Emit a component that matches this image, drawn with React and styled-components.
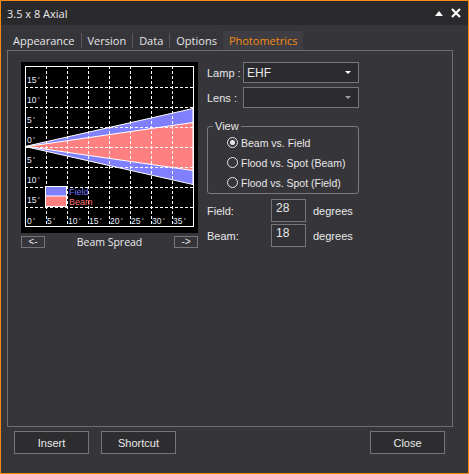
import styled, { createGlobalStyle } from "styled-components";

const GlobalStyle = createGlobalStyle`
  body {
    margin: 0;
    background: #36353a;
  }
  * { box-sizing: border-box; }
`;

const Window = styled.div`
  width: 469px;
  height: 474px;
  border: 1px solid #f68a12;
  background: #36353a;
  display: flex;
  flex-direction: column;
  font-family: "Liberation Sans", Arial, sans-serif;
  font-size: 11px;
  color: #e8e8e8;
`;

const TitleBar = styled.div`
  height: 24px;
  background: #2a2a2d;
  display: flex;
  align-items: center;
  padding: 0 7px 0 6px;
  font-family: "Open Sans", sans-serif;
  font-size: 11px;
  color: #ececec;
`;

const Title = styled.div`
  flex: 1;
`;

const TitleIcons = styled.div`
  display: flex;
  align-items: center;
  gap: 8px;
`;

const Body = styled.div`
  flex: 1;
  display: flex;
  flex-direction: column;
  padding: 6px 15px 0 6px;
`;

const TabStrip = styled.div`
  display: flex;
  height: 19px;
  align-items: stretch;
  font-family: "Open Sans", sans-serif;
  font-size: 11px;
`;

const Tab = styled.div`
  padding: 0 6px;
  display: flex;
  align-items: center;
  color: ${(p) => (p.$active ? "#f68a12" : "#e6e6e6")};
  background: ${(p) => (p.$active ? "#3d3d43" : "transparent")};
`;

const TabSep = styled.div`
  width: 1px;
  margin: 2px 0;
  background: #57575c;
`;

const Panel = styled.div`
  height: 377px;
  border: 1px solid #6e6e72;
  display: flex;
  padding: 11px 0 0 13px;
  gap: 9px;
`;

const ChartColumn = styled.div`
  width: 177px;
  display: flex;
  flex-direction: column;
`;

const ChartBox = styled.div`
  width: 177px;
  height: 171px;
  background: #000;
`;

const ChartNav = styled.div`
  display: flex;
  align-items: center;
  justify-content: space-between;
  margin-top: 2px;
  height: 13px;
`;

const NavButton = styled.div`
  width: 24px;
  height: 12px;
  border: 1px solid #76767a;
  display: flex;
  align-items: center;
  justify-content: center;
  font-size: 10px;
  line-height: 1;
`;

const ChartCaption = styled.div`
  font-family: "Open Sans", sans-serif;
  font-size: 10.5px;
  color: #eaeaea;
`;

const FormColumn = styled.div`
  width: 152px;
  display: flex;
  flex-direction: column;
`;

const SelectRow = styled.div`
  display: flex;
  align-items: center;
  height: 21px;
  margin-bottom: ${(p) => p.$gap || 0}px;
`;

const FieldLabel = styled.div`
  width: ${(p) => p.$width}px;
  white-space: nowrap;
`;

const Select = styled.div`
  width: 116px;
  height: 21px;
  border: 1px solid #76767a;
  background: #2b2b2e;
  display: flex;
  align-items: center;
  justify-content: space-between;
  padding: 0 7px 0 3px;
  font-size: 12px;
`;

const Caret = styled.span`
  width: 0;
  height: 0;
  border-left: 3.5px solid transparent;
  border-right: 3.5px solid transparent;
  border-top: 3.5px solid ${(p) => (p.$dim ? "#a0a0a0" : "#ffffff")};
`;

const Group = styled.fieldset`
  margin: 12px 0 0 0;
  padding: 3px 0 0 19px;
  height: 74px;
  border: 1px solid #7a7a7e;
  border-radius: 3px;
  display: flex;
  flex-direction: column;
  gap: 5px;
`;

const Legend = styled.legend`
  padding: 0 2px;
  margin-left: -14px;
`;

const RadioRow = styled.label`
  display: flex;
  align-items: center;
  height: 15px;
  gap: 3px;
  white-space: nowrap;
  font-size: 10.5px;
`;

const RadioDot = styled.span`
  width: 11px;
  height: 11px;
  border-radius: 50%;
  border: 1px solid #e8e8e8;
  display: flex;
  align-items: center;
  justify-content: center;
  &::after {
    content: "";
    width: 5px;
    height: 5px;
    border-radius: 50%;
    background: ${(p) => (p.$checked ? "#e8e8e8" : "transparent")};
  }
`;

const ValueRow = styled.div`
  display: flex;
  align-items: center;
  margin-top: ${(p) => p.$top}px;
`;

const ValueBox = styled.div`
  width: 35px;
  height: 23px;
  border: 1px solid #76767a;
  background: #323236;
  padding: 1px 0 0 4px;
  margin-right: 7px;
  font-size: 12px;
`;

const ButtonRow = styled.div`
  display: flex;
  padding: 4px 8px 0 7px;
  gap: 12px;
`;

const Button = styled.div`
  width: 75px;
  height: 23px;
  border: 1px solid #76767a;
  background: #2d2d30;
  display: flex;
  align-items: center;
  justify-content: center;
  margin-left: ${(p) => (p.$push ? "auto" : "0")};
`;

const hLines = [25, 45, 65, 85, 105, 125, 145];
const vLines = [25, 46, 67, 88, 109, 130, 151];
const sideLabels = ["15", "10", "5", "0", "5", "10", "15"];
const bottomLabels = ["0", "5", "10", "15", "20", "25", "30", "35"];

const Deg = ({ x, y, value }) => (
  <text x={x} y={y} fill="#e4ecff" fontSize="8.5" fontFamily="Liberation Sans, sans-serif">
    {value}
    <tspan fontSize="5" dy="-2"> °</tspan>
  </text>
);

const BeamChart = () => {
  const cy = 84.5;
  return (
    <svg width="177" height="171" viewBox="0 0 177 171">
      <polygon points={`4,${cy} 172,${cy - 38} 172,${cy + 38}`} fill="#8080ff" stroke="#fff" strokeWidth="1" />
      <polygon points={`6,${cy} 172,${cy - 24} 172,${cy + 24}`} fill="#ff8080" stroke="#fff" strokeWidth="1" />
      {hLines.map((y) => (
        <line key={"h" + y} x1="4" x2="172" y1={y + 0.5} y2={y + 0.5} stroke="#fff" strokeDasharray="3 2" />
      ))}
      {vLines.map((x) => (
        <line key={"v" + x} x1={x + 0.5} x2={x + 0.5} y1="4" y2="164" stroke="#fff" strokeDasharray="3 2" />
      ))}
      <rect x="4.5" y="4.5" width="168" height="160" fill="none" stroke="#fff" />
      {sideLabels.map((l, i) => (
        <Deg key={"s" + i} x={6} y={21 + i * 20} value={l} />
      ))}
      {bottomLabels.map((l, i) => (
        <Deg key={"b" + i} x={i === 0 ? 6 : 5 + i * 21} y={162} value={l} />
      ))}
      <rect x="24" y="124" width="22" height="10" fill="#8080ff" />
      <rect x="24" y="134" width="22" height="10" fill="#ff8080" />
      <rect x="24.5" y="124.5" width="21" height="20" fill="none" stroke="#fff" />
      <line x1="24" x2="46" y1="134" y2="134" stroke="#fff" />
      <text x="48" y="133" fill="#7070ff" fontSize="9" fontFamily="Liberation Sans, sans-serif">Field</text>
      <text x="48" y="143" fill="#ff7070" fontSize="9" fontFamily="Liberation Sans, sans-serif">Beam</text>
    </svg>
  );
};

const App = () => {
  return (
    <>
      <GlobalStyle />
      <Window>
        <TitleBar>
          <Title>3.5 x 8 Axial</Title>
          <TitleIcons>
            <svg width="8" height="5" viewBox="0 0 8 5">
              <polygon points="0,5 4,0 8,5" fill="#fff" />
            </svg>
            <svg width="10" height="10" viewBox="0 0 10 10">
              <path d="M1 1 L9 9 M9 1 L1 9" stroke="#fff" strokeWidth="2.2" />
            </svg>
          </TitleIcons>
        </TitleBar>
        <Body>
          <TabStrip>
            <Tab>Appearance</Tab>
            <TabSep />
            <Tab>Version</Tab>
            <TabSep />
            <Tab>Data</Tab>
            <TabSep />
            <Tab>Options</Tab>
            <Tab $active>Photometrics</Tab>
          </TabStrip>
          <Panel>
            <ChartColumn>
              <ChartBox>
                <BeamChart />
              </ChartBox>
              <ChartNav>
                <NavButton>&lt;-</NavButton>
                <ChartCaption>Beam Spread</ChartCaption>
                <NavButton>-&gt;</NavButton>
              </ChartNav>
            </ChartColumn>
            <FormColumn>
              <SelectRow $gap={4}>
                <FieldLabel $width={36}>Lamp :</FieldLabel>
                <Select>
                  <span>EHF</span>
                  <Caret />
                </Select>
              </SelectRow>
              <SelectRow>
                <FieldLabel $width={36}>Lens :</FieldLabel>
                <Select>
                  <span />
                  <Caret $dim />
                </Select>
              </SelectRow>
              <Group>
                <Legend>View</Legend>
                <RadioRow>
                  <RadioDot $checked />
                  Beam vs. Field
                </RadioRow>
                <RadioRow>
                  <RadioDot />
                  Flood vs. Spot (Beam)
                </RadioRow>
                <RadioRow>
                  <RadioDot />
                  Flood vs. Spot (Field)
                </RadioRow>
              </Group>
              <ValueRow $top={5}>
                <FieldLabel $width={64}>Field:</FieldLabel>
                <ValueBox>28</ValueBox>
                degrees
              </ValueRow>
              <ValueRow $top={2}>
                <FieldLabel $width={64}>Beam:</FieldLabel>
                <ValueBox>18</ValueBox>
                degrees
              </ValueRow>
            </FormColumn>
          </Panel>
          <ButtonRow>
            <Button>Insert</Button>
            <Button>Shortcut</Button>
            <Button $push>Close</Button>
          </ButtonRow>
        </Body>
      </Window>
    </>
  );
};

export default App;
